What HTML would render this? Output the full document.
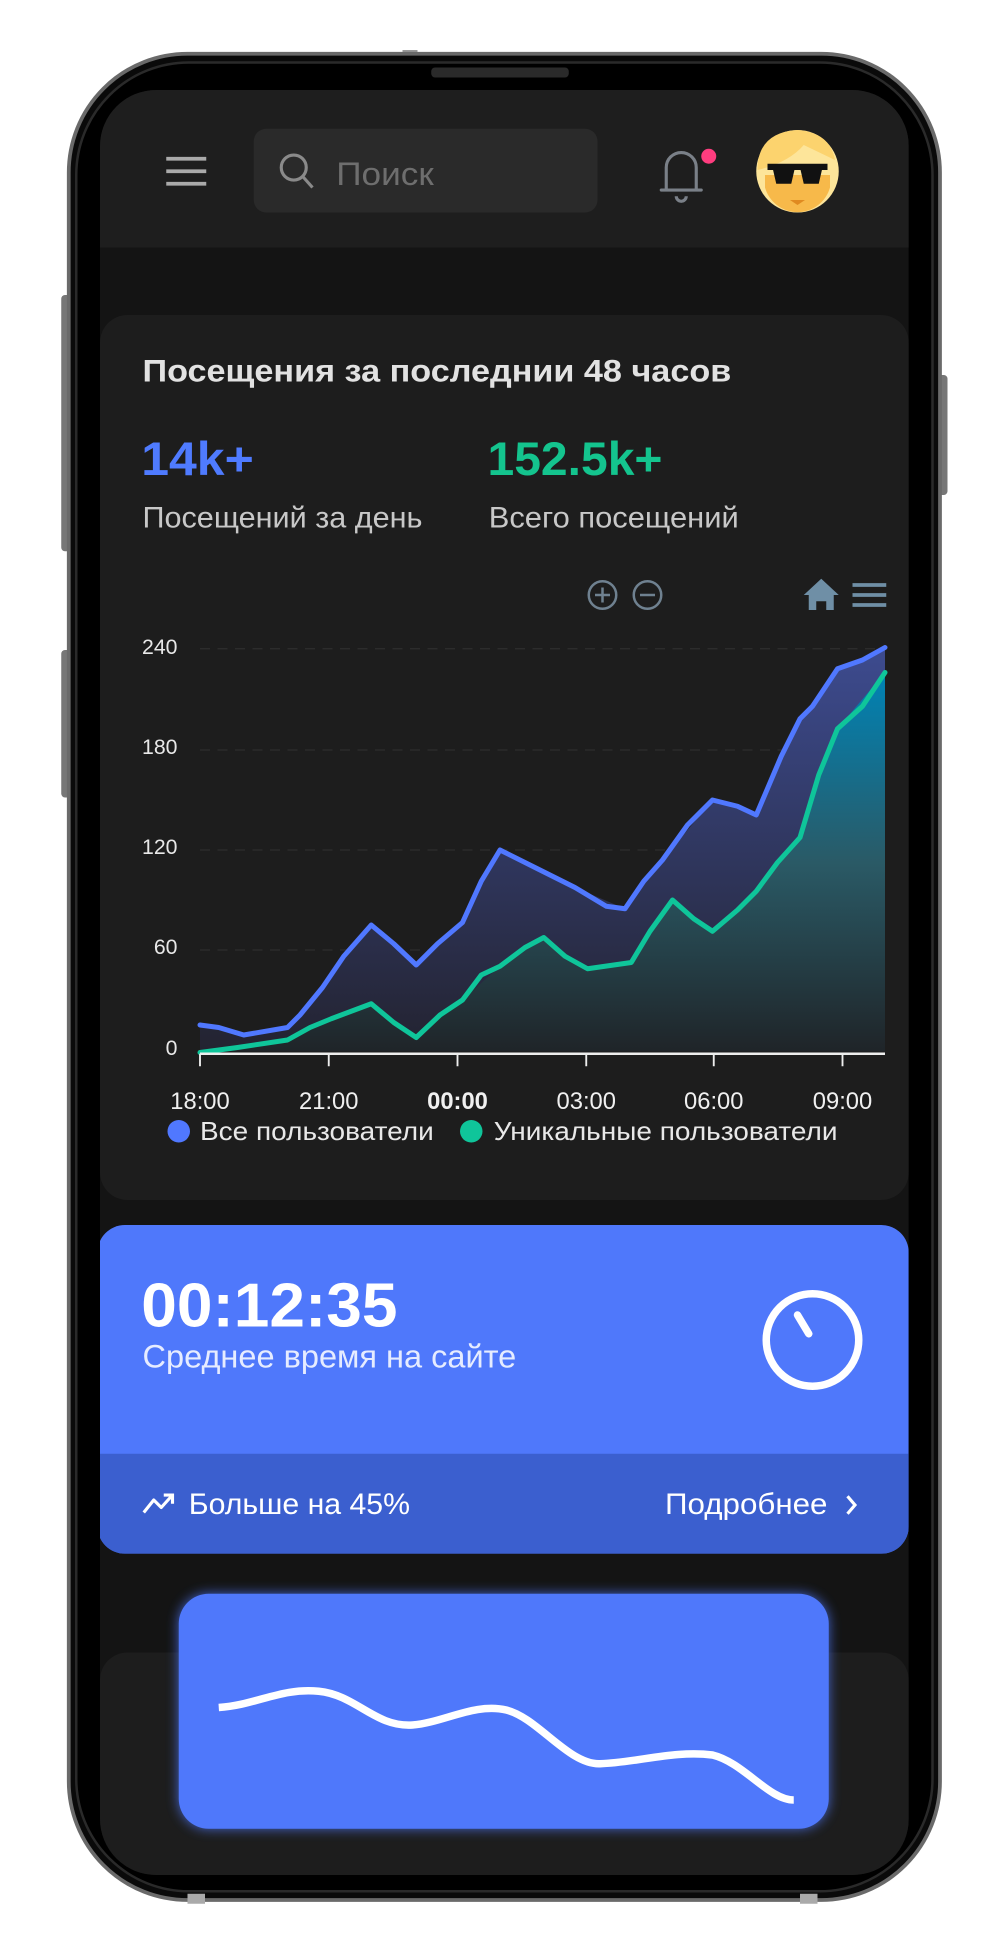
<!DOCTYPE html>
<html><head><meta charset="utf-8"><style>
html,body{margin:0;padding:0;background:#fff;width:1000px;height:1944px;overflow:hidden}
svg{display:block}
text{font-family:"Liberation Sans",sans-serif}
</style></head><body>
<svg width="1000" height="1944" viewBox="0 0 800 1555.2" xmlns="http://www.w3.org/2000/svg">
<defs>
<linearGradient id="gb" x1="0" y1="0" x2="0" y2="1"><stop offset="0" stop-color="#3d4b8f"/><stop offset="1" stop-color="#232330"/></linearGradient>
<linearGradient id="gg" x1="0" y1="0" x2="0" y2="1"><stop offset="0" stop-color="#0083b5"/><stop offset="0.5" stop-color="#2a5a66"/><stop offset="1" stop-color="#1f2428"/></linearGradient>
<filter id="glow" x="-20%" y="-20%" width="140%" height="140%"><feGaussianBlur stdDeviation="5"/></filter>
</defs>
<rect x="49" y="236" width="8" height="205" rx="3" fill="#777"/>
<rect x="49" y="520" width="8" height="118" rx="3" fill="#777"/>
<rect x="750" y="300" width="8" height="96" rx="3" fill="#777"/>
<rect x="322" y="40" width="12" height="10" fill="#999"/>
<rect x="55" y="43" width="697" height="1477" rx="95" fill="#0a0a0a" stroke="#6a6a6a" stroke-width="3"/>
<rect x="61" y="50" width="685" height="1463" rx="90" fill="#000" stroke="#2a2a2a" stroke-width="2"/>
<rect x="345" y="54" width="110" height="8" rx="3" fill="#2a2a2a"/>
<clipPath id="sc"><rect x="80" y="72" width="647" height="1428" rx="45"/></clipPath>
<g clip-path="url(#sc)">
<rect x="80" y="72" width="647" height="1428" fill="#141414"/>
<rect x="80" y="72" width="647" height="126" fill="#1e1e1e"/>
<g stroke="#aaa" stroke-width="3"><line x1="133" y1="127" x2="165" y2="127"/><line x1="133" y1="137" x2="165" y2="137"/><line x1="133" y1="147" x2="165" y2="147"/></g>
<rect x="203" y="103" width="275" height="67" rx="10" fill="#2a2a2a"/>
<circle cx="235" cy="134" r="10" fill="none" stroke="#8a8a8a" stroke-width="2.5"/>
<line x1="242" y1="141" x2="250" y2="150" stroke="#8a8a8a" stroke-width="2.5"/>
<text x="269" y="148" font-size="26" fill="#6e6e6e" textLength="78" lengthAdjust="spacingAndGlyphs">Поиск</text>
<path d="M533 152 v-18 a12 12 0 0 1 24 0 v18 h4 h-32 z" fill="none" stroke="#7a8088" stroke-width="2.5" stroke-linejoin="round"/>
<path d="M541 157 a4 4 0 0 0 8 0" fill="none" stroke="#7a8088" stroke-width="2.5"/>
<circle cx="567" cy="125" r="6" fill="#ff3d7f"/>
<circle cx="638" cy="137" r="33" fill="#fde59a"/>
<path d="M612 150 a27 27 0 0 0 52 0 v-10 h-52 z" fill="#f7b94a"/>
<path d="M606 136 q0 -30 32 -32 q26 2 30 24 l-25 -12 q-12 14 -37 20z" fill="#fcd36e"/>
<rect x="614" y="131" width="48" height="5" fill="#111"/>
<path d="M618 134 h18 l-3 13 h-12 z M640 134 h18 l-3 13 h-12 z" fill="#111"/>
<path d="M632 160 h12 l-6 4 z" fill="#e08a20"/>
<rect x="80" y="252" width="647" height="708" rx="22" fill="#1d1d1d"/>
<text x="114" y="305" font-size="25" font-weight="bold" fill="#e2e2e2" textLength="471" lengthAdjust="spacingAndGlyphs">Посещения за последнии 48 часов</text>
<text x="113" y="380" font-size="38" font-weight="bold" fill="#4f7bff" textLength="90" lengthAdjust="spacingAndGlyphs">14k+</text>
<text x="390" y="380" font-size="38" font-weight="bold" fill="#14c48e" textLength="140" lengthAdjust="spacingAndGlyphs">152.5k+</text>
<text x="114" y="422" font-size="24" fill="#c8c8c8" textLength="224" lengthAdjust="spacingAndGlyphs">Посещений за день</text>
<text x="391" y="422" font-size="24" fill="#c8c8c8" textLength="200" lengthAdjust="spacingAndGlyphs">Всего посещений</text>
<g fill="none" stroke="#6f8190" stroke-width="2"><circle cx="482" cy="476" r="11"/><circle cx="518" cy="476" r="11"/>
<path d="M476 476h12M482 470v12M512 476h12"/></g>
<path d="M643 476 l14 -13 l14 13 h-4 v12 h-6 v-7 h-8 v7 h-6 v-12z" fill="#6f8fa6"/>
<g stroke="#6f8fa6" stroke-width="3"><line x1="682" y1="468" x2="709" y2="468"/><line x1="682" y1="476" x2="709" y2="476"/><line x1="682" y1="484" x2="709" y2="484"/></g>
<g stroke="#2e2e2e" stroke-width="1" stroke-dasharray="8 6"><line x1="160" y1="519" x2="708" y2="519"/><line x1="160" y1="600" x2="708" y2="600"/><line x1="160" y1="680" x2="708" y2="680"/><line x1="160" y1="760" x2="708" y2="760"/></g>
<g font-size="17" fill="#e8e8e8" text-anchor="end"><text x="142" y="523">240</text><text x="142" y="603">180</text><text x="142" y="683">120</text><text x="142" y="763">60</text><text x="142" y="844">0</text></g>
<polygon fill="url(#gb)" points="160,820 195,828 230,822 258,790 297,740 333,772 370,738 400,680 430,695 460,710 500,727 530,688 570,640 605,652 640,575 670,535 708,518 708,841 160,841"/>
<polygon fill="url(#gg)" points="160,842 230,832 265,815 297,803 333,830 370,800 400,773 435,750 470,775 505,770 538,720 570,745 605,713 640,670 670,583 708,538 708,841 160,841"/>
<polyline fill="none" stroke="#5078ff" stroke-width="4" stroke-linejoin="round" stroke-linecap="round" points="160,820 175,822 195,828 230,822 240,812 258,790 275,765 297,740 315,755 333,772 350,755 370,738 385,705 400,680 430,695 460,710 485,725 500,727 515,705 530,688 550,660 570,640 590,645 605,652 625,605 640,575 650,565 670,535 690,528 708,518"/>
<polyline fill="none" stroke="#0fc59a" stroke-width="4" stroke-linejoin="round" stroke-linecap="round" points="160,842 190,838 230,832 248,822 265,815 297,803 315,818 333,830 352,812 370,800 385,780 400,773 420,758 435,750 452,765 470,775 505,770 520,745 538,720 555,735 570,745 590,728 605,713 622,690 640,670 655,620 670,583 690,565 708,538"/>
<line x1="160" y1="843" x2="708" y2="843" stroke="#eee" stroke-width="2"/>
<g stroke="#eee" stroke-width="1.5"><line x1="160" y1="843" x2="160" y2="853"/><line x1="263" y1="843" x2="263" y2="853"/><line x1="366" y1="843" x2="366" y2="853"/><line x1="469" y1="843" x2="469" y2="853"/><line x1="571" y1="843" x2="571" y2="853"/><line x1="674" y1="843" x2="674" y2="853"/></g>
<g font-size="19" fill="#f0f0f0" text-anchor="middle"><text x="160" y="887">18:00</text><text x="263" y="887">21:00</text><text x="366" y="887" font-weight="bold">00:00</text><text x="469" y="887">03:00</text><text x="571" y="887">06:00</text><text x="674" y="887">09:00</text></g>
<circle cx="143" cy="905" r="9" fill="#5078ff"/><text x="160" y="912" font-size="21" fill="#e8e8e8" textLength="187" lengthAdjust="spacingAndGlyphs">Все пользователи</text>
<circle cx="377" cy="905" r="9" fill="#0fc59a"/><text x="395" y="912" font-size="21" fill="#e8e8e8" textLength="275" lengthAdjust="spacingAndGlyphs">Уникальные пользователи</text>
<clipPath id="bc"><rect x="78" y="980" width="649" height="263" rx="22"/></clipPath>
<g clip-path="url(#bc)">
<rect x="78" y="980" width="649" height="263" fill="#4f78fb"/>
<rect x="78" y="1163" width="649" height="80" fill="#3b5fcf"/>
</g>
<text x="113" y="1061" font-size="50" font-weight="bold" fill="#fff" textLength="205" lengthAdjust="spacingAndGlyphs">00:12:35</text>
<text x="114" y="1094" font-size="26" fill="#e6ecff" textLength="299" lengthAdjust="spacingAndGlyphs">Среднее время на сайте</text>
<circle cx="650" cy="1072" r="37" fill="none" stroke="#fff" stroke-width="6"/>
<line x1="638" y1="1052" x2="647" y2="1067" stroke="#fff" stroke-width="6" stroke-linecap="round"/>
<polyline points="115,1210 123,1200 129,1206 138,1196" fill="none" stroke="#fff" stroke-width="2.5" stroke-linejoin="round"/>
<polyline points="131,1196 138,1196 138,1203" fill="none" stroke="#fff" stroke-width="2.5"/>
<text x="151" y="1211" font-size="24" fill="#fff" textLength="177" lengthAdjust="spacingAndGlyphs">Больше на 45%</text>
<text x="532" y="1211" font-size="24" fill="#fff" textLength="130" lengthAdjust="spacingAndGlyphs">Подробнее</text>
<polyline points="678,1197 684,1204 678,1211" fill="none" stroke="#fff" stroke-width="2.5"/>
<rect x="80" y="1322" width="647" height="200" rx="22" fill="#1d1d1d"/>
<rect x="143" y="1275" width="520" height="188" rx="24" fill="#4f78fb" filter="url(#glow)" opacity="0.8"/>
<rect x="143" y="1275" width="520" height="188" rx="24" fill="#4f78fb"/>
<path d="M175 1366 C205 1364 225 1350 255 1353 C285 1356 300 1382 330 1380 C355 1378 380 1362 405 1368 C430 1374 455 1412 480 1411 C510 1410 540 1400 570 1404 C595 1410 615 1440 635 1440" fill="none" stroke="#fff" stroke-width="6"/>
</g>
<rect x="150" y="1515" width="14" height="8" fill="#aaa"/><rect x="640" y="1515" width="14" height="8" fill="#aaa"/>
</svg>
</body></html>
